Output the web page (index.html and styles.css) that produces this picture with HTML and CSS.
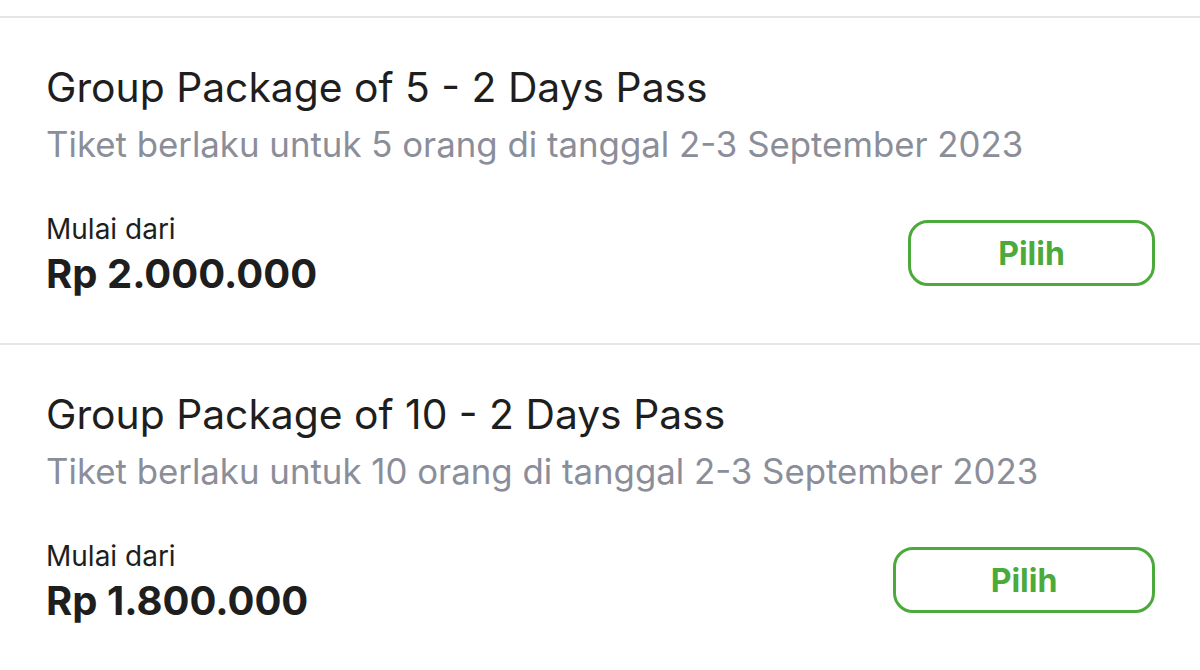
FILE: index.html
```html
<!DOCTYPE html>
<html lang="id">
<head>
  <meta charset="UTF-8">
  <title>Pilih Tiket</title>
  <link rel="stylesheet" href="styles.css">
</head>
<body>
  <div class="list-tiket">
    <div class="tiket">
      <h3 class="tiket-judul">Group Package of 5 - 2 Days Pass</h3>
      <p class="tiket-desc">Tiket berlaku untuk 5 orang di tanggal 2-3 September 2023</p>
      <div class="tiket-bawah">
        <div class="harga">
          <span class="harga-label">Mulai dari</span>
          <span class="harga-nilai">Rp 2.000.000</span>
        </div>
        <button class="btn-pilih">Pilih</button>
      </div>
    </div>
    <div class="tiket">
      <h3 class="tiket-judul">Group Package of 10 - 2 Days Pass</h3>
      <p class="tiket-desc">Tiket berlaku untuk 10 orang di tanggal 2-3 September 2023</p>
      <div class="tiket-bawah">
        <div class="harga">
          <span class="harga-label">Mulai dari</span>
          <span class="harga-nilai">Rp 1.800.000</span>
        </div>
        <button class="btn-pilih lebar">Pilih</button>
      </div>
    </div>
  </div>
</body>
</html>
```

FILE: styles.css
```css
body { margin: 0; background: #fff; font-family: Inter, "Noto Sans", sans-serif; color: #1e1e1e; }
.list-tiket { padding-top: 16px; }
.tiket { border-top: 2px solid #e6e6e6; padding: 44px 45px 0 46px; height: 281px; }
.tiket-judul { margin: 0; font-size: 40.8px; line-height: 50px; font-weight: 400; color: #1e1e1e; }
.tiket-desc { margin: 10px 0 0; font-size: 34.8px; line-height: 44px; color: #8b8e99; }
.tiket-bawah { display: flex; justify-content: space-between; align-items: center; margin-top: 42px; }
.harga { display: flex; flex-direction: column; }
.harga-label { font-size: 28px; line-height: 42px; }
.harga-nilai { font-size: 40px; line-height: 48px; font-weight: 700; }
.btn-pilih { width: 247px; height: 66px; border: 3px solid #4caa3c; border-radius: 20px; background: #fff; color: #4caa3c; font-family: inherit; font-size: 32px; font-weight: 700; cursor: pointer; }
.btn-pilih.lebar { width: 262px; }
```
